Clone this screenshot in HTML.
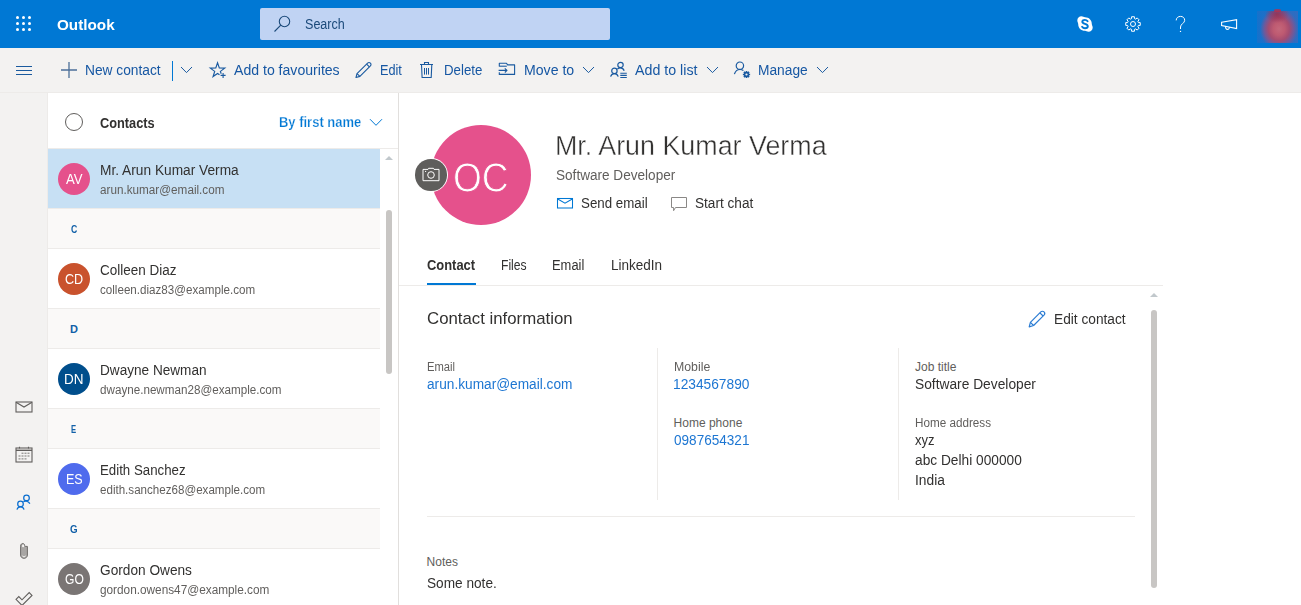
<!DOCTYPE html>
<html><head><meta charset="utf-8"><style>
html,body{margin:0;padding:0;width:1301px;height:605px;overflow:hidden;background:#fff;font-family:"Liberation Sans",sans-serif}
.b{position:absolute}
.t{position:absolute;white-space:nowrap;transform-origin:0 0;font-family:"Liberation Sans",sans-serif}
svg.b{overflow:visible}
</style></head><body>
<div class=b style="left:0px;top:0px;width:1301px;height:48px;background:#0078d4;"></div>
<div class=b style="left:0px;top:48px;width:1301px;height:44px;background:#f3f2f1;"></div>
<div class=b style="left:0px;top:92px;width:1301px;height:1px;background:#edebe9;"></div>
<div class=b style="left:0px;top:93px;width:47px;height:512px;background:#f3f2f1;"></div>
<div class=b style="left:47px;top:93px;width:1px;height:512px;background:#edebe9;"></div>
<div class=b style="left:48px;top:93px;width:350px;height:512px;background:#ffffff;"></div>
<div class=b style="left:398px;top:93px;width:1px;height:512px;background:#e1dfdd;"></div>
<div class=b style="left:399px;top:93px;width:902px;height:512px;background:#ffffff;"></div>
<div class=b style="left:260px;top:8px;width:350px;height:32px;background:#c0d3f3;border-radius:2px"></div>
<div class=b style="left:48px;top:148px;width:350px;height:1px;background:#edebe9;"></div>
<div class=b style="left:48px;top:149px;width:332px;height:59px;background:#c7e0f4;"></div>
<div class=b style="left:48px;top:208px;width:332px;height:1px;background:#edebe9;"></div>
<div class=b style="left:48px;top:209px;width:332px;height:39px;background:#faf9f8;"></div>
<div class=b style="left:48px;top:248px;width:332px;height:1px;background:#edebe9;"></div>
<div class=b style="left:48px;top:308px;width:332px;height:1px;background:#edebe9;"></div>
<div class=b style="left:48px;top:309px;width:332px;height:39px;background:#faf9f8;"></div>
<div class=b style="left:48px;top:348px;width:332px;height:1px;background:#edebe9;"></div>
<div class=b style="left:48px;top:408px;width:332px;height:1px;background:#edebe9;"></div>
<div class=b style="left:48px;top:409px;width:332px;height:39px;background:#faf9f8;"></div>
<div class=b style="left:48px;top:448px;width:332px;height:1px;background:#edebe9;"></div>
<div class=b style="left:48px;top:508px;width:332px;height:1px;background:#edebe9;"></div>
<div class=b style="left:48px;top:509px;width:332px;height:39px;background:#faf9f8;"></div>
<div class=b style="left:48px;top:548px;width:332px;height:1px;background:#edebe9;"></div>
<div class=b style="left:58px;top:163px;width:32px;height:32px;background:#e5518c;border-radius:50%"></div>
<div class=b style="left:58px;top:263px;width:32px;height:32px;background:#c9522d;border-radius:50%"></div>
<div class=b style="left:58px;top:363px;width:32px;height:32px;background:#004e8c;border-radius:50%"></div>
<div class=b style="left:58px;top:463px;width:32px;height:32px;background:#4f6bed;border-radius:50%"></div>
<div class=b style="left:58px;top:563px;width:32px;height:32px;background:#7a7574;border-radius:50%"></div>
<div class=b style="left:386px;top:210px;width:6px;height:164px;background:#c8c6c4;border-radius:3px"></div>
<svg class=b style='left:384px;top:155px' width=10 height=6><path d='M1 5 L5 1 L9 5 Z' fill='#c1c8cc'/></svg>
<div class=b style="left:431px;top:125px;width:100px;height:100px;background:#e5518c;border-radius:50%"></div>
<div class=b style="left:413.5px;top:157.5px;width:34.8px;height:34.8px;background:#ffffff;border-radius:50%"></div>
<div class=b style="left:415.2px;top:159.2px;width:31.5px;height:31.5px;background:#5f5e5c;border-radius:50%"></div>
<div class=b style="left:427px;top:283px;width:49px;height:2px;background:#0078d4;"></div>
<div class=b style="left:399px;top:285px;width:764px;height:1px;background:#edebe9;"></div>
<svg class=b style='left:1149px;top:292px' width=10 height=6><path d='M1 5 L5 1 L9 5 Z' fill='#c1c8cc'/></svg>
<div class=b style="left:1151px;top:310px;width:6px;height:278px;background:#c8c6c4;border-radius:3px"></div>
<div class=b style="left:657px;top:348px;width:1px;height:152px;background:#edebe9;"></div>
<div class=b style="left:898px;top:348px;width:1px;height:152px;background:#edebe9;"></div>
<div class=b style="left:427px;top:516px;width:708px;height:1px;background:#edebe9;"></div>
<div class=t style="left:57.00px;top:17px;font-size:15px;line-height:15px;font-weight:600;color:#ffffff;transform:scaleX(1.0175);">Outlook</div>
<div class=t style="left:304.50px;top:17px;font-size:14px;line-height:14px;font-weight:400;color:#1b4a7a;transform:scaleX(0.8977);">Search</div>
<div class=t style="left:85.40px;top:63px;font-size:14px;line-height:14px;font-weight:400;color:#1657a3;transform:scaleX(0.9821);">New contact</div>
<div class=t style="left:233.90px;top:63px;font-size:14px;line-height:14px;font-weight:400;color:#1657a3;transform:scaleX(1.0057);">Add to favourites</div>
<div class=t style="left:380.30px;top:63px;font-size:14px;line-height:14px;font-weight:400;color:#1657a3;transform:scaleX(0.9080);">Edit</div>
<div class=t style="left:443.70px;top:63px;font-size:14px;line-height:14px;font-weight:400;color:#1657a3;transform:scaleX(0.9463);">Delete</div>
<div class=t style="left:523.60px;top:63px;font-size:14px;line-height:14px;font-weight:400;color:#1657a3;transform:scaleX(1.0080);">Move to</div>
<div class=t style="left:634.70px;top:63px;font-size:14px;line-height:14px;font-weight:400;color:#1657a3;transform:scaleX(1.0161);">Add to list</div>
<div class=t style="left:758.20px;top:63px;font-size:14px;line-height:14px;font-weight:400;color:#1657a3;transform:scaleX(0.9824);">Manage</div>
<div class=t style="left:100.30px;top:116px;font-size:14px;line-height:14px;font-weight:600;color:#323130;transform:scaleX(0.9133);">Contacts</div>
<div class=t style="left:278.90px;top:115px;font-size:14px;line-height:14px;font-weight:600;color:#0078d4;transform:scaleX(0.9270);-webkit-text-stroke:0.25px #fff">By first name</div>
<div class=t style="left:65.60px;top:172px;font-size:14px;line-height:14px;font-weight:400;color:#ffffff;transform:scaleX(0.9389);">AV</div>
<div class=t style="left:100.40px;top:163px;font-size:14px;line-height:14px;font-weight:400;color:#323130;transform:scaleX(0.9796);">Mr. Arun Kumar Verma</div>
<div class=t style="left:100.40px;top:184px;font-size:12px;line-height:12px;font-weight:400;color:#605e5c;transform:scaleX(0.9758);">arun.kumar@email.com</div>
<div class=t style="left:70.70px;top:224px;font-size:11px;line-height:11px;font-weight:600;color:#1160a8;transform:scaleX(0.7875);">C</div>
<div class=t style="left:65.00px;top:272px;font-size:14px;line-height:14px;font-weight:400;color:#ffffff;transform:scaleX(0.9000);">CD</div>
<div class=t style="left:100.40px;top:263px;font-size:14px;line-height:14px;font-weight:400;color:#323130;transform:scaleX(0.9633);">Colleen Diaz</div>
<div class=t style="left:100.40px;top:284px;font-size:12px;line-height:12px;font-weight:400;color:#605e5c;transform:scaleX(0.9681);">colleen.diaz83@example.com</div>
<div class=t style="left:70.00px;top:324px;font-size:11px;line-height:11px;font-weight:600;color:#1160a8;transform:scaleX(1.0000);">D</div>
<div class=t style="left:64.20px;top:372px;font-size:14px;line-height:14px;font-weight:400;color:#ffffff;transform:scaleX(0.9650);">DN</div>
<div class=t style="left:100.40px;top:363px;font-size:14px;line-height:14px;font-weight:400;color:#323130;transform:scaleX(0.9709);">Dwayne Newman</div>
<div class=t style="left:100.40px;top:384px;font-size:12px;line-height:12px;font-weight:400;color:#605e5c;transform:scaleX(0.9711);">dwayne.newman28@example.com</div>
<div class=t style="left:71.40px;top:424px;font-size:11px;line-height:11px;font-weight:600;color:#1160a8;transform:scaleX(0.7000);">E</div>
<div class=t style="left:65.50px;top:472px;font-size:14px;line-height:14px;font-weight:400;color:#ffffff;transform:scaleX(0.8947);">ES</div>
<div class=t style="left:100.40px;top:463px;font-size:14px;line-height:14px;font-weight:400;color:#323130;transform:scaleX(0.9478);">Edith Sanchez</div>
<div class=t style="left:100.40px;top:484px;font-size:12px;line-height:12px;font-weight:400;color:#605e5c;transform:scaleX(0.9655);">edith.sanchez68@example.com</div>
<div class=t style="left:69.50px;top:524px;font-size:11px;line-height:11px;font-weight:600;color:#1160a8;transform:scaleX(0.8889);">G</div>
<div class=t style="left:64.50px;top:572px;font-size:14px;line-height:14px;font-weight:400;color:#ffffff;transform:scaleX(0.8636);">GO</div>
<div class=t style="left:100.40px;top:563px;font-size:14px;line-height:14px;font-weight:400;color:#323130;transform:scaleX(0.9766);">Gordon Owens</div>
<div class=t style="left:100.40px;top:584px;font-size:12px;line-height:12px;font-weight:400;color:#605e5c;transform:scaleX(0.9831);">gordon.owens47@example.com</div>
<div class=t style="left:453.32px;top:157px;font-size:42px;line-height:42px;font-weight:400;color:#ffffff;transform:scaleX(0.8836);-webkit-text-stroke:0.9px #e5518c">OC</div>
<div class=t style="left:555.01px;top:133px;font-size:27px;line-height:27px;font-weight:400;color:#323130;transform:scaleX(0.9945);-webkit-text-stroke:0.4px #fff">Mr. Arun Kumar Verma</div>
<div class=t style="left:556.00px;top:168px;font-size:14px;line-height:14px;font-weight:400;color:#605e5c;transform:scaleX(0.9699);">Software Developer</div>
<div class=t style="left:581.40px;top:196px;font-size:14px;line-height:14px;font-weight:400;color:#323130;transform:scaleX(0.9514);">Send email</div>
<div class=t style="left:695.30px;top:196px;font-size:14px;line-height:14px;font-weight:400;color:#323130;transform:scaleX(0.9733);">Start chat</div>
<div class=t style="left:427.20px;top:258px;font-size:14px;line-height:14px;font-weight:600;color:#323130;transform:scaleX(0.9226);">Contact</div>
<div class=t style="left:500.80px;top:258px;font-size:14px;line-height:14px;font-weight:400;color:#323130;transform:scaleX(0.8667);">Files</div>
<div class=t style="left:552.20px;top:258px;font-size:14px;line-height:14px;font-weight:400;color:#323130;transform:scaleX(0.9229);">Email</div>
<div class=t style="left:610.50px;top:258px;font-size:14px;line-height:14px;font-weight:400;color:#323130;transform:scaleX(0.9660);">LinkedIn</div>
<div class=t style="left:427.40px;top:310px;font-size:17px;line-height:17px;font-weight:400;color:#323130;transform:scaleX(0.9878);">Contact information</div>
<div class=t style="left:1053.50px;top:312px;font-size:14px;line-height:14px;font-weight:400;color:#323130;transform:scaleX(0.9784);">Edit contact</div>
<div class=t style="left:427.40px;top:361px;font-size:12px;line-height:12px;font-weight:400;color:#605e5c;transform:scaleX(0.9333);">Email</div>
<div class=t style="left:427.40px;top:377px;font-size:14px;line-height:14px;font-weight:400;color:#1d76d2;transform:scaleX(0.9772);">arun.kumar@email.com</div>
<div class=t style="left:673.60px;top:361px;font-size:12px;line-height:12px;font-weight:400;color:#605e5c;transform:scaleX(1.0250);">Mobile</div>
<div class=t style="left:672.62px;top:377px;font-size:14px;line-height:14px;font-weight:400;color:#1d76d2;transform:scaleX(0.9818);">1234567890</div>
<div class=t style="left:673.60px;top:417px;font-size:12px;line-height:12px;font-weight:400;color:#605e5c;transform:scaleX(1.0000);">Home phone</div>
<div class=t style="left:673.60px;top:433px;font-size:14px;line-height:14px;font-weight:400;color:#1d76d2;transform:scaleX(0.9692);">0987654321</div>
<div class=t style="left:915.00px;top:361px;font-size:12px;line-height:12px;font-weight:400;color:#605e5c;transform:scaleX(1.0000);">Job title</div>
<div class=t style="left:915.00px;top:377px;font-size:14px;line-height:14px;font-weight:400;color:#323130;transform:scaleX(0.9837);">Software Developer</div>
<div class=t style="left:915.00px;top:417px;font-size:12px;line-height:12px;font-weight:400;color:#605e5c;transform:scaleX(0.9744);">Home address</div>
<div class=t style="left:915.00px;top:433px;font-size:14px;line-height:14px;font-weight:400;color:#323130;transform:scaleX(0.9286);">xyz</div>
<div class=t style="left:915.00px;top:453px;font-size:14px;line-height:14px;font-weight:400;color:#323130;transform:scaleX(0.9798);">abc Delhi 000000</div>
<div class=t style="left:915.00px;top:473px;font-size:14px;line-height:14px;font-weight:400;color:#323130;transform:scaleX(0.9839);">India</div>
<div class=t style="left:426.60px;top:556px;font-size:12px;line-height:12px;font-weight:400;color:#605e5c;transform:scaleX(1.0000);">Notes</div>
<div class=t style="left:426.80px;top:576px;font-size:14px;line-height:14px;font-weight:400;color:#323130;transform:scaleX(0.9746);">Some note.</div>
<!-- waffle -->
<svg class=b style="left:14px;top:14px" width=20 height=20 viewBox="0 0 20 20" fill="#fff">
<circle cx="3.5" cy="3.5" r="1.5"/><circle cx="9.5" cy="3.5" r="1.5"/><circle cx="15.5" cy="3.5" r="1.5"/>
<circle cx="3.5" cy="9.5" r="1.5"/><circle cx="9.5" cy="9.5" r="1.5"/><circle cx="15.5" cy="9.5" r="1.5"/>
<circle cx="3.5" cy="15.5" r="1.5"/><circle cx="9.5" cy="15.5" r="1.5"/><circle cx="15.5" cy="15.5" r="1.5"/>
</svg>
<!-- search icon -->
<svg class=b style="left:272px;top:14px" width=20 height=20 viewBox="0 0 20 20" fill="none" stroke="#1b4a7a" stroke-width="1.1">
<circle cx="12.5" cy="7.5" r="5.2"/><path d="M8.8 11.2 L2.5 17.5"/>
</svg>
<!-- skype -->
<svg class=b style="left:1077px;top:16px" width=16 height=16 viewBox="0 0 16 16">
<path fill="#fff" d="M4.5 0.3 C6 0.3 6.8 1.2 8 1.2 C12 1.2 14.8 4 14.8 8 C14.8 9.2 15.7 10 15.7 11.5 C15.7 13.9 13.9 15.7 11.5 15.7 C10 15.7 9.2 14.8 8 14.8 C4 14.8 1.2 12 1.2 8 C1.2 6.8 0.3 6 0.3 4.5 C0.3 2.1 2.1 0.3 4.5 0.3 Z"/>
<path fill="none" stroke="#0078d4" stroke-width="1.9" stroke-linecap="round" d="M10.6 5.2 C10 4.3 9 3.9 7.9 3.9 C6.4 3.9 5.3 4.6 5.3 5.8 C5.3 8.4 10.8 7.3 10.8 10.2 C10.8 11.4 9.6 12.2 8 12.2 C6.7 12.2 5.7 11.6 5.1 10.7"/>
</svg>
<!-- gear -->
<svg class=b style="left:1125px;top:16px" width=16 height=16 viewBox="0 0 16 16" fill="none" stroke="#fff" stroke-width="1">
<path stroke-linejoin="round" d="M6.55 2.59 L6.59 0.74 L9.41 0.74 L9.45 2.59 L10.80 3.15 L12.14 1.87 L14.13 3.86 L12.85 5.20 L13.41 6.55 L15.26 6.59 L15.26 9.41 L13.41 9.45 L12.85 10.80 L14.13 12.14 L12.14 14.13 L10.80 12.85 L9.45 13.41 L9.41 15.26 L6.59 15.26 L6.55 13.41 L5.20 12.85 L3.86 14.13 L1.87 12.14 L3.15 10.80 L2.59 9.45 L0.74 9.41 L0.74 6.59 L2.59 6.55 L3.15 5.20 L1.87 3.86 L3.86 1.87 L5.20 3.15 Z"/>
<circle cx="8" cy="8" r="2.5"/>
</svg>
<!-- help -->
<svg class=b style="left:1174px;top:15px" width=14 height=18 viewBox="0 0 14 18" fill="none" stroke="#fff" stroke-width="1">
<path d="M2.2 5.4 C2.2 3 4 1.4 6.5 1.4 C9 1.4 10.7 3 10.7 5.3 C10.7 8.2 6.5 9 6.5 12 V14"/>
<circle cx="6.5" cy="16.4" r="0.7" fill="#fff" stroke="none"/>
</svg>
<!-- megaphone -->
<svg class=b style="left:1219px;top:17px" width=20 height=15 viewBox="0 0 20 15" fill="none" stroke="#fff" stroke-width="1.1" stroke-linejoin="miter">
<path d="M2.6 5.3 L17.6 2.6 V11.6 L2.6 8.6 Z"/>
<path d="M6.6 9.4 C6.4 11.2 7.3 12.4 8.5 12.4 C9.6 12.4 10.5 11.4 10.3 10.1"/>
</svg>
<!-- avatar blurred -->
<div class=b style="left:1257px;top:11px;width:41px;height:32px;background:radial-gradient(ellipse 12px 9px at 20px 3px,rgba(155,45,75,0.8) 0%,rgba(155,45,75,0) 100%),radial-gradient(ellipse 19px 21px at 22px 18px,#c4677b 0%,#be5a71 30%,#a44c70 55%,#6c5a9c 78%,rgba(40,108,196,0.55) 100%),linear-gradient(to right,#0078d4 0%,#1673cc 30%,#386dbc 100%)"></div>
<div class=b style="left:1274px;top:9px;width:7px;height:2.5px;border-radius:50%;background:#b8304c;opacity:0.8;filter:blur(0.6px)"></div>
<!-- hamburger -->
<svg class=b style="left:16px;top:65px" width=16 height=11 viewBox="0 0 16 11" fill="#1a5a9e">
<rect x="0" y="1" width="16" height="1"/><rect x="0" y="5" width="16" height="1"/><rect x="0" y="9" width="16" height="1"/>
</svg>
<!-- plus -->
<svg class=b style="left:61px;top:62px" width=16 height=16 viewBox="0 0 16 16" fill="none" stroke="#4c6f99" stroke-width="1.3">
<path d="M8 0 V16 M0 8 H16"/>
</svg>
<!-- separator + chevron -->
<div class=b style="left:172px;top:61px;width:1px;height:20px;background:#0078d4"></div>
<svg class=b style="left:180px;top:66px" width=13 height=8 viewBox="0 0 13 8" fill="none" stroke="#1a5aa0" stroke-width="1">
<path d="M1 1 L6.5 6.6 L12 1"/>
</svg>
<!-- star plus -->
<svg class=b style="left:209px;top:62px" width=18 height=17 viewBox="0 0 18 17" fill="none" stroke="#1a5aa0" stroke-width="1.15" stroke-linejoin="miter">
<path d="M12.2 11.7 L11.40 9.37 L15.78 6.09 L10.31 6.01 L8.55 0.84 L6.79 6.01 L1.32 6.09 L5.70 9.37 L4.08 14.59 L8.55 11.44 L10.5 12.8"/>
<path d="M14.1 10.9 V15.9 M11.6 13.4 H16.6" stroke-width="1.1"/>
</svg>
<!-- pencil (toolbar) -->
<svg class=b style="left:355px;top:62px" width=17 height=16 viewBox="0 0 17 16" fill="none" stroke="#1a5aa0" stroke-width="1.1" stroke-linejoin="round">
<path d="M1 15.5 L2 11.6 L12.6 1.1 C13.4 0.3 14.6 0.3 15.4 1.1 C16.2 1.9 16.2 3.1 15.4 3.9 L4.9 14.4 Z"/>
<path d="M2 11.6 L4.9 14.4 M11.6 2.1 L14.4 4.9"/>
</svg>
<!-- trash -->
<svg class=b style="left:419px;top:61px" width=16 height=18 viewBox="0 0 16 18" fill="none" stroke="#1a5aa0" stroke-width="1.1">
<path d="M1 3.5 H14 M5.5 3.5 V1.5 H9.5 V3.5 M2.5 3.5 L3.1 16.5 H12.2 L12.8 3.5"/>
<path d="M5.5 7 V13.6 M7.5 7 V13.6 M9.5 7 V13.6" stroke-width="1"/>
</svg>
<!-- move folder -->
<svg class=b style="left:498px;top:62px" width=18 height=14 viewBox="0 0 18 14" fill="none" stroke="#1a5aa0" stroke-width="1.1" stroke-linejoin="round">
<path d="M1.3 4.6 V1.3 H8.5 L9.6 2.9 H16.6 V12.4 H1.3 V10.2"/>
<path d="M1.3 4.2 H8.8"/>
<path d="M0.6 8.4 H9 M6.8 6.3 L9 8.4 L6.8 10.5"/>
</svg>
<svg class=b style="left:582px;top:66px" width=13 height=8 viewBox="0 0 13 8" fill="none" stroke="#1a5aa0" stroke-width="1">
<path d="M1 1 L6.5 6.6 L12 1"/>
</svg>
<!-- add to list -->
<svg class=b style="left:609px;top:61px" width=19 height=18 viewBox="0 0 19 18" fill="none" stroke="#1a5aa0" stroke-width="1.2">
<circle cx="11.5" cy="4" r="2.7"/><path d="M8.4 8.0 C9.4 7.2 10.4 6.9 11.5 6.9 C13.2 6.9 14.5 7.9 15.2 9.8"/>
<circle cx="5.4" cy="9.9" r="2.7"/><path d="M1.6 15.6 C2.2 13.6 3.4 12.6 5.4 12.6 C7.4 12.6 8.6 13.6 9.2 15.6"/>
<path d="M11.3 12.2 H17.8 M11.3 14.4 H17.8 M11.3 16.5 H17.8" stroke-width="1.1"/>
</svg>
<svg class=b style="left:706px;top:66px" width=13 height=8 viewBox="0 0 13 8" fill="none" stroke="#1a5aa0" stroke-width="1">
<path d="M1 1 L6.5 6.6 L12 1"/>
</svg>
<!-- manage -->
<svg class=b style="left:733px;top:61px" width=19 height=18 viewBox="0 0 19 18" fill="none" stroke="#1a5aa0" stroke-width="1.2">
<circle cx="6.9" cy="4.7" r="3.7"/><path d="M1.4 13.2 C2.2 10.4 4.2 8.5 7 8.5 C8.3 8.5 9.4 8.9 10.4 9.6"/>
<path fill="#1a5aa0" stroke="none" d="M12.67 10.93 L12.67 9.89 L14.33 9.89 L14.33 10.93 L14.73 11.09 L15.46 10.36 L16.64 11.54 L15.91 12.27 L16.07 12.67 L17.11 12.67 L17.11 14.33 L16.07 14.33 L15.91 14.73 L16.64 15.46 L15.46 16.64 L14.73 15.91 L14.33 16.07 L14.33 17.11 L12.67 17.11 L12.67 16.07 L12.27 15.91 L11.54 16.64 L10.36 15.46 L11.09 14.73 L10.93 14.33 L9.89 14.33 L9.89 12.67 L10.93 12.67 L11.09 12.27 L10.36 11.54 L11.54 10.36 L12.27 11.09 Z"/>
<circle cx="13.5" cy="13.5" r="1.1" fill="#f3f2f1" stroke="none"/>
</svg>
<svg class=b style="left:816px;top:66px" width=13 height=8 viewBox="0 0 13 8" fill="none" stroke="#1a5aa0" stroke-width="1">
<path d="M1 1 L6.5 6.6 L12 1"/>
</svg>
<!-- rail: mail -->
<svg class=b style="left:15px;top:401px" width=18 height=12 viewBox="0 0 18 12" fill="none" stroke="#605e5c" stroke-width="1.1">
<rect x="1" y="1" width="16" height="10"/><path d="M1 1.3 L9 6 L17 1.3"/>
</svg>
<!-- rail: calendar -->
<svg class=b style="left:15px;top:446px" width=18 height=17 viewBox="0 0 18 17" fill="none" stroke="#605e5c" stroke-width="1.1">
<rect x="1" y="2" width="16" height="14"/><path d="M1 4.3 H17" stroke-width="1.4"/>
<path d="M4.5 0.8 V2.5 M13.5 0.8 V2.5"/>
<g fill="#7a7876" stroke="none">
<rect x="6.5" y="6.7" width="2" height="1"/><rect x="9.5" y="6.7" width="2" height="1"/><rect x="12.5" y="6.7" width="2" height="1"/>
<rect x="3.5" y="9.5" width="2" height="1"/><rect x="6.5" y="9.5" width="2" height="1"/><rect x="9.5" y="9.5" width="2" height="1"/><rect x="12.5" y="9.5" width="2" height="1"/>
<rect x="3.5" y="12.4" width="2" height="1"/><rect x="6.5" y="12.4" width="2" height="1"/><rect x="9.5" y="12.4" width="2" height="1"/>
</g>
</svg>
<!-- rail: people -->
<svg class=b style="left:15px;top:493px" width=18 height=18 viewBox="0 0 18 18" fill="none" stroke="#0b6fd0" stroke-width="1.25">
<circle cx="11.5" cy="4.9" r="2.8"/><path d="M8.4 8.6 C9.6 8.0 13 7.6 14.9 10.6"/>
<circle cx="5.5" cy="10.9" r="2.8"/><path d="M2 16.6 C2.5 14.7 3.7 13.8 5.5 13.8 C7.3 13.8 8.5 14.7 9 16.6"/>
</svg>
<!-- rail: paperclip -->
<svg class=b style="left:19px;top:542px" width=10 height=18 viewBox="0 0 10 18">
<path d="M1.6 13 V4.2 C1.6 0.7 5.6 0.7 5.7 3.6 L6.2 4.4 H8.4 V13 C8.4 17.4 1.6 17.4 1.6 13 Z" fill="#a8a6a4" stroke="#6e6c6a" stroke-width="1"/>
<ellipse cx="4.1" cy="3.9" rx="1.1" ry="1.4" fill="#f3f2f1"/>
<path d="M3.3 13.6 C3.6 15.3 6.4 15.3 6.7 13.6" fill="none" stroke="#f3f2f1" stroke-width="1"/>
</svg>
<!-- rail: todo -->
<svg class=b style="left:15px;top:590px" width=18 height=15 viewBox="0 0 18 15" fill="none" stroke="#605e5c" stroke-width="1.1" stroke-linejoin="miter">
<path d="M1 9.3 L3.8 6.6 L7 9.8 L14.2 2.6 L17 5.4 L7 15.4 Z"/>
</svg>
<!-- list header circle -->
<div class=b style="left:65px;top:113px;width:16px;height:16px;border:1px solid #605e5c;border-radius:50%"></div>
<!-- by first name chevron -->
<svg class=b style="left:369px;top:118px" width=14 height=9 viewBox="0 0 14 9" fill="none" stroke="#0078d4" stroke-width="1">
<path d="M1 1.2 L7 7.3 L13 1.2"/>
</svg>
<!-- camera -->
<svg class=b style="left:422px;top:167px" width=18 height=15 viewBox="0 0 18 15" fill="none" stroke="#fff" stroke-width="1">
<path d="M1 2.4 H6 L6.6 1.3 H11.4 L12 2.4 H17 V13.7 H1 Z"/>
<circle cx="9" cy="8" r="3.3"/>
<circle cx="3.6" cy="4.4" r="0.6" fill="#fff" stroke="none"/>
</svg>
<!-- send email -->
<svg class=b style="left:556px;top:197px" width=18 height=12 viewBox="0 0 18 12" fill="none" stroke="#0078d4" stroke-width="1.05">
<rect x="1.5" y="1.5" width="15" height="9.5"/><path d="M1.7 2 L9 6.2 L16.3 2"/>
</svg>
<!-- chat -->
<svg class=b style="left:670px;top:196px" width=18 height=16 viewBox="0 0 18 16" fill="none" stroke="#8a8886" stroke-width="1">
<path d="M1.5 1.5 H16.5 V11.5 H5.5 L3.6 14.7 V11.5 H1.5 Z" stroke-linejoin="miter"/>
</svg>
<!-- edit contact pencil -->
<svg class=b style="left:1028px;top:310px" width=18 height=18 viewBox="0 0 18 18" fill="none" stroke="#2b7cd3" stroke-width="1.2" stroke-linejoin="round">
<path d="M1.2 16.8 L2.4 12.3 L12.8 1.9 C13.7 1 15.1 1 16 1.9 C16.9 2.8 16.9 4.2 16 5.1 L5.6 15.5 Z"/>
<path d="M2.4 12.3 L5.6 15.5 M11.9 2.8 L15.1 6"/>
</svg>

</body></html>
